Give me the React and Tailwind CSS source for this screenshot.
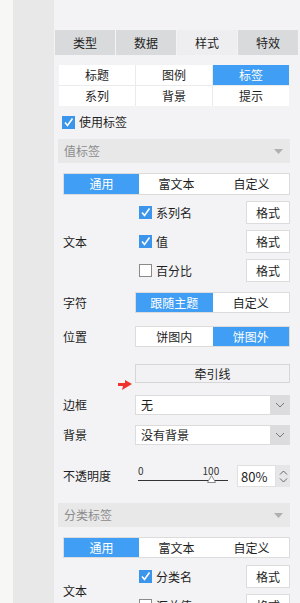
import React from "react";

const Check = ({ on }) =>
  on ? (
    <span className="w-[13px] h-[13px] bg-[#3b95ea] flex items-center justify-center shrink-0">
      <svg width="11" height="11" viewBox="0 0 11 11">
        <path d="M2 5.5 L4.5 8.5 L9.5 1.5" stroke="#fff" strokeWidth="1.6" fill="none" />
      </svg>
    </span>
  ) : (
    <span className="w-[13px] h-[13px] bg-white border border-[#8a8a8a] shrink-0" />
  );

const Seg = ({ items, active, cls }) => (
  <div className={"flex border border-[#dcdcdc] bg-white " + cls}>
    {items.map((t, i) => (
      <div
        key={t}
        className={
          "flex-1 flex items-center justify-center " +
          (i === active ? "bg-[#419ef5] text-white" : "text-[#1e1e1e]")
        }
      >
        {t}
      </div>
    ))}
  </div>
);

const Btn = () => (
  <div className="w-[44px] h-[23px] bg-white border border-[#dcdcdc] flex items-center justify-center">格式</div>
);

const Header = ({ title }) => (
  <div className="ml-[4px] w-[232px] h-[24px] bg-[#e8e8e9] flex items-center justify-between px-[6px] text-[#8c8c8c]">
    <span>{title}</span>
    <svg width="9" height="5" viewBox="0 0 9 5" className="mr-[1px]">
      <path d="M0 0 L9 0 L4.5 5 Z" fill="#b0b0b0" />
    </svg>
  </div>
);

const Chevron = () => (
  <svg width="10" height="6" viewBox="0 0 10 6">
    <path d="M1 1 L5 5 L9 1" stroke="#777" strokeWidth="1" fill="none" />
  </svg>
);

const Dropdown = ({ value }) => (
  <div className="w-[155px] h-[20px] flex border border-[#dcdcdc] bg-white">
    <div className="flex-1 flex items-center pl-[5px]">{value}</div>
    <div className="w-[19px] bg-[#dcdcde] flex items-center justify-center">
      <Chevron />
    </div>
  </div>
);

const TextRows = ({ rows }) => (
  <div className="flex ml-[9px]">
    <div className="w-[76px] flex items-center">文本</div>
    <div className="w-[151px] flex flex-col gap-[6px]">
      {rows.map(([t, on]) => (
        <div key={t} className="h-[23px] flex items-center justify-between">
          <div className="flex items-center gap-[4px]">
            <Check on={on} />
            <span>{t}</span>
          </div>
          <Btn />
        </div>
      ))}
    </div>
  </div>
);

export default function App() {
  return (
    <div className="w-[300px] h-[603px] overflow-hidden flex text-[12px] leading-none text-[#1e1e1e] font-['Noto_Sans_CJK_SC','Microsoft_YaHei',sans-serif]">
      <div className="w-[13px] bg-[#f7f7f5]" />
      <div className="w-[41px] bg-[#e8e8e8]" />
      <div className="flex-1 bg-[#f3f3f5] pt-[30px] flex flex-col *:shrink-0">
        <div className="flex gap-px pl-px h-[25px]">
          {["类型", "数据", "样式", "特效"].map((t, i) => (
            <div
              key={t}
              className={
                "w-[60px] flex items-center justify-center " +
                (i === 2 ? "bg-[#eeeef0]" : "bg-[#d9dadc]")
              }
            >
              {t}
            </div>
          ))}
        </div>

        <div className="ml-[5px] mt-[10px] w-[230px] grid grid-cols-3 gap-px bg-[#ebebeb]">
          {["标题", "图例", "标签", "系列", "背景", "提示"].map((t, i) => (
            <div
              key={t}
              className={
                "h-[20px] flex items-center justify-center " +
                (i === 2 ? "bg-[#419ef5] text-white" : "bg-white")
              }
            >
              {t}
            </div>
          ))}
        </div>

        <div className="ml-[8px] mt-[9px] h-[14px] flex items-center gap-[4px]">
          <Check on />
          <span>使用标签</span>
        </div>

        <div className="mt-[10px]">
          <Header title="值标签" />
        </div>

        <Seg items={["通用", "富文本", "自定义"]} active={0} cls="ml-[9px] mt-[10px] w-[227px] h-[22px]" />

        <div className="mt-[6px]">
          <TextRows rows={[["系列名", true], ["值", true], ["百分比", false]]} />
        </div>

        <div className="ml-[9px] mt-[10px] flex">
          <div className="w-[72px] flex items-center">字符</div>
          <Seg items={["跟随主题", "自定义"]} active={0} cls="w-[155px] h-[21px]" />
        </div>

        <div className="ml-[9px] mt-[13px] flex">
          <div className="w-[72px] flex items-center">位置</div>
          <Seg items={["饼图内", "饼图外"]} active={1} cls="w-[155px] h-[21px]" />
        </div>

        <div className="ml-[9px] mt-[17px] flex relative">
          <div className="w-[72px]" />
          <div className="w-[155px] h-[19px] border border-[#d6d6d6] bg-[#f2f2f4] flex items-center justify-center">
            牵引线
          </div>
          <svg className="absolute left-[55px] top-[16px]" width="14" height="10" viewBox="0 0 14 10">
            <path d="M0 3 L7 3 L7 0 L14 4 L4 10 L5 6 L0 6 Z" fill="#f0322d" />
          </svg>
        </div>

        <div className="ml-[9px] mt-[12px] flex">
          <div className="w-[72px] flex items-center">边框</div>
          <Dropdown value="无" />
        </div>

        <div className="ml-[9px] mt-[10px] flex">
          <div className="w-[72px] flex items-center">背景</div>
          <Dropdown value="没有背景" />
        </div>

        <div className="ml-[9px] mt-[20px] flex h-[22px]">
          <div className="w-[75px] flex items-center">不透明度</div>
          <div className="w-[90px] relative flex flex-col">
            <div className="h-[14px] flex items-start text-[10px] text-[#333] pt-[1px]">
              <span>0</span>
              <span className="ml-[59px]">100</span>
            </div>
            <div className="h-px bg-[#333] mt-px" />
            <svg className="absolute left-[69px] top-[10px]" width="9" height="8" viewBox="0 0 9 8">
              <path d="M4.5 0.5 L8.5 7.5 L0.5 7.5 Z" fill="#fff" stroke="#8a8a8a" strokeWidth="1" />
            </svg>
          </div>
          <div className="ml-[9px] w-[39px] bg-white border border-[#e0e0e0] flex items-center pl-[3px] text-[13px]">80%</div>
          <div className="w-[14px] bg-[#e6e6e8] flex flex-col items-center justify-center gap-[3px]">
            <svg width="9" height="5" viewBox="0 0 9 5">
              <path d="M1 4.5 L4.5 1 L8 4.5" stroke="#666" fill="none" />
            </svg>
            <svg width="9" height="5" viewBox="0 0 9 5">
              <path d="M1 0.5 L4.5 4 L8 0.5" stroke="#666" fill="none" />
            </svg>
          </div>
        </div>

        <div className="mt-[16px]">
          <Header title="分类标签" />
        </div>

        <Seg items={["通用", "富文本", "自定义"]} active={0} cls="ml-[9px] mt-[10px] w-[227px] h-[21px]" />

        <div className="mt-[7px]">
          <TextRows rows={[["分类名", true], ["汇总值", false]]} />
        </div>
      </div>
    </div>
  );
}
